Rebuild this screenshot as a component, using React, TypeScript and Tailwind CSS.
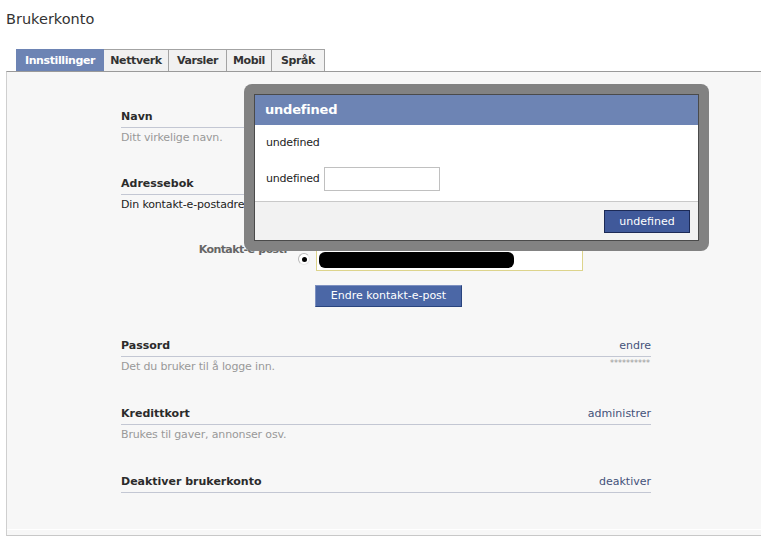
import React from "react";

const tabs = [
  { label: "Innstillinger", w: "w-[88px]", active: true },
  { label: "Nettverk", w: "w-[65px]" },
  { label: "Varsler", w: "w-[58px]" },
  { label: "Mobil", w: "w-[45px]" },
  { label: "Språk", w: "w-[53px]" },
];

function Section({
  title,
  link,
  desc,
  descDark,
  extra,
  className,
}: {
  title: string;
  link?: string;
  desc?: string;
  descDark?: boolean;
  extra?: React.ReactNode;
  className?: string;
}) {
  return (
    <div className={className}>
      <div className="flex h-[19px] items-baseline justify-between border-b border-[#c3c7d3]">
        <span className="text-[11px] font-bold leading-[16px] text-[#2b2b2b]">{title}</span>
        {link && <span className="text-[11px] leading-[16px] text-[#44527a]">{link}</span>}
      </div>
      {desc && (
        <div className="flex justify-between pt-[3px]">
          <span className={`text-[11px] leading-[14px] tracking-[-0.15px] ${descDark ? "text-[#222]" : "text-[#999]"}`}>
            {desc}
          </span>
          {extra}
        </div>
      )}
    </div>
  );
}

export default function App() {
  return (
    <div className="relative h-[537px] w-[761px] overflow-hidden bg-white font-['DejaVu_Sans',Verdana,sans-serif] text-[#333]">
      <div className="pl-[6px] pt-[10px] text-[14.5px] leading-[18px] text-[#333]">Brukerkonto</div>

      <div className="ml-[16px] mt-[21px] flex h-[22px]">
        {tabs.map((t) =>
          t.active ? (
            <div
              key={t.label}
              className={`${t.w} h-[22px] bg-[#6d84b4] pt-[2px] text-center text-[11px] font-bold leading-[20px] tracking-[-0.4px] text-white`}
            >
              {t.label}
            </div>
          ) : (
            <div
              key={t.label}
              className={`${t.w} h-[22px] border-r border-t border-[#a3a3a3] bg-[#f1f1f1] pt-[1px] text-center text-[11px] font-bold leading-[20px] tracking-[-0.4px] text-[#333]`}
            >
              {t.label}
            </div>
          )
        )}
      </div>

      <div className="ml-[6px] flex h-[465px] flex-col border-b border-l border-t border-b-[#c8c8c8] border-l-[#cfcfcf] border-t-[#9a9a9a] bg-[#f7f7f7]">
        <div className="ml-[114px] w-[530px] pt-[37px]">
          <Section title="Navn" link="endre" desc="Ditt virkelige navn." />
          <Section
            className="mt-[31px]"
            title="Adressebok"
            desc="Din kontakt-e-postadresse brukes til varsler."
            descDark
          />

          <div className="mt-[37px] flex">
            <div className="-mt-[6px] w-[166px] text-right text-[11px] font-bold leading-[14px] tracking-[-0.6px] text-[#666]">
              Kontakt-e-post:
            </div>
            <div className="ml-[11px] mt-[4px] flex h-[12px] w-[12px] items-center justify-center rounded-full border border-[#b8b8b8] border-b-[#e8e8e8] border-r-[#e8e8e8] bg-white">
              <div className="h-[5px] w-[5px] rounded-full bg-black" />
            </div>
            <div className="ml-[6px] h-[22px] w-[267px] border border-[#ddd48c] bg-white">
              <div className="ml-[2px] mt-[2px] h-[16px] w-[195px] rounded-[6px] bg-black" />
            </div>
          </div>

          <div className="ml-[194px] mt-[14px] flex h-[22px] w-[147px] items-center justify-center border border-b-[#29447e] border-l-[#7d90c0] border-r-[#29447e] border-t-[#7d90c0] bg-[#4b67a6] text-[11px] leading-[20px] text-white">
            Endre kontakt-e-post
          </div>

          <Section
            className="mt-[31px]"
            title="Passord"
            link="endre"
            desc="Det du bruker til å logge inn."
            extra={<span className="mr-[1px] text-[8px] leading-[8px] text-[#999]">**********</span>}
          />
          <Section className="mt-[32px]" title="Kredittkort" link="administrer" desc="Brukes til gaver, annonser osv." />
          <Section className="mt-[32px]" title="Deaktiver brukerkonto" link="deaktiver" />
        </div>
        <div className="mb-[5px] mt-auto h-px bg-white" />
      </div>

      {/* Dialog overlay */}
      <div className="absolute left-[244px] top-[84px] h-[167px] w-[465px] rounded-[8px] bg-[#828282] p-[10px]">
        <div className="flex h-full flex-col border border-[#4a4a4a] bg-white">
          <div className="h-[30px] bg-[#6d84b4] pl-[10px] text-[13px] font-bold leading-[30px] tracking-[-0.2px] text-white">
            undefined
          </div>
          <div className="h-[76px] pl-[11px] pt-[11px] text-[11px] leading-[14px] tracking-[-0.2px] text-[#222]">
            <div>undefined</div>
            <div className="mt-[17px] flex items-center">
              <span>undefined</span>
              <div className="ml-[4px] h-[24px] w-[116px] border border-[#c0c0c0] bg-white" />
            </div>
          </div>
          <div className="flex flex-1 justify-end border-t border-[#c9c9c9] bg-[#f2f2f2] pr-[8px] pt-[8px]">
            <div className="flex h-[23px] w-[86px] items-center justify-center border border-[#1c2a56] bg-[#40599a] text-[11px] leading-[21px] text-white">
              undefined
            </div>
          </div>
        </div>
      </div>
    </div>
  );
}
